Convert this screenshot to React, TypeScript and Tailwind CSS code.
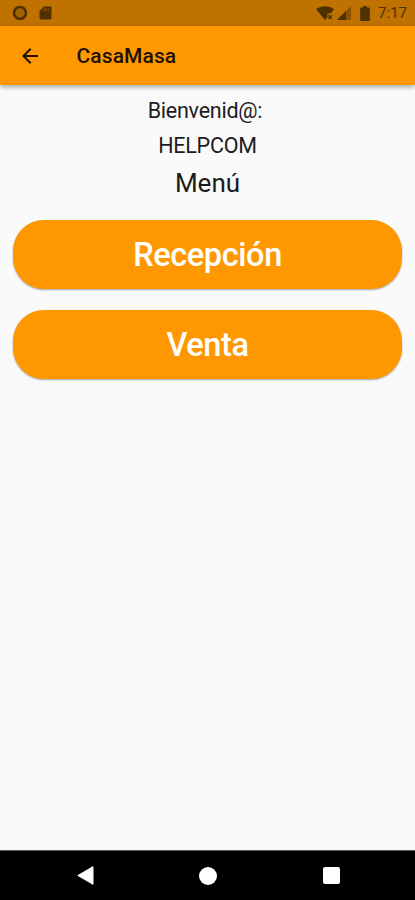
import type { ReactNode } from "react";

const menuItems = [
  { id: 1, label: "Recepción" },
  { id: 2, label: "Venta" },
];

function StatusBar() {
  return (
    <div className="flex h-[26px] shrink-0 items-center justify-between bg-[#bf7200] pl-[12px] pr-[8px] text-[#4f3000]">
      <div className="flex items-center gap-[11px]">
        <svg className="h-4 w-4" viewBox="0 0 16 16" fill="none">
          <circle cx="8" cy="8" r="6" fill="#a26102" stroke="currentColor" strokeWidth="2.6" />
        </svg>
        <svg className="h-[14px] w-[13px]" viewBox="0 0 13 14">
          <path d="M5 .5h6.3c.7 0 1.2.5 1.2 1.2v10.6c0 .7-.5 1.2-1.2 1.2H1.7c-.7 0-1.2-.5-1.2-1.2V5z" fill="currentColor" />
          <path d="M5.4 2.5v2.3M7.6 2.5v2.3M9.8 2.5v2.3" stroke="#a26102" strokeWidth="1" />
        </svg>
      </div>
      <div className="flex items-center">
        <svg className="h-[14px] w-[18px]" viewBox="0 0 18 14">
          <path d="M0 3.2C5-.7 13-.7 18 3.2l-3.4 4.2h-3.2v3.8L9 14z" fill="currentColor" />
          <path d="M12.4 9.2l3.4 3.8M15.8 9.2l-3.4 3.8" stroke="currentColor" strokeWidth="1.4" />
        </svg>
        <svg className="ml-[3px] h-[14px] w-[14px]" viewBox="0 0 14 14">
          <path d="M14 0v14H0z" fill="#8a5301" />
          <path d="M9 5v9H0z" fill="currentColor" />
        </svg>
        <svg className="ml-[9px] h-[15px] w-[10px]" viewBox="0 0 10 15">
          <path d="M3 0h4v1.6h1.8c.6 0 1 .4 1 1V14c0 .6-.4 1-1 1H1.2c-.6 0-1-.4-1-1V2.6c0-.6.4-1 1-1H3z" fill="currentColor" />
        </svg>
        <span className="ml-[8px] text-[15px] leading-none">7:17</span>
      </div>
    </div>
  );
}

function AppBar({ title }: { title: string }) {
  return (
    <header className="z-10 flex h-[59px] shrink-0 items-center bg-[#ff9800] pl-[20px] shadow-[0_2px_5px_rgba(0,0,0,0.35)]">
      <button aria-label="Volver" className="flex h-5 w-5 items-center justify-center">
        <svg className="h-4 w-4" viewBox="4 4 16 16">
          <path d="M20 11H7.83l5.59-5.59L12 4l-8 8 8 8 1.41-1.41L7.83 13H20z" fill="#1c1100" />
        </svg>
      </button>
      <h1 className="ml-[36.5px] mt-[2px] text-[21px] font-medium leading-none tracking-[0.1px] text-[#1c1100]">{title}</h1>
    </header>
  );
}

function MenuButton({ children }: { children: ReactNode }) {
  return (
    <button className="flex h-[69px] w-full items-center justify-center rounded-[31px] bg-[#ff9800] pt-px text-[32.5px] font-medium leading-none tracking-[-0.4px] text-white shadow-[0_1px_2px_rgba(0,0,0,0.35)]">
      {children}
    </button>
  );
}

function NavigationBar() {
  return (
    <nav className="flex h-[50px] shrink-0 items-center justify-between border-t border-[#555] bg-black pl-[77px] pr-[75px]">
      <svg className="h-[19px] w-[17px]" viewBox="0 0 17 19">
        <path d="M15.8 1v17L1.2 9.5z" fill="white" stroke="white" strokeWidth="1.4" strokeLinejoin="round" />
      </svg>
      <div className="mr-[2px] h-[18px] w-[18px] rounded-full bg-white" />
      <div className="h-[17px] w-[17px] rounded-[2px] bg-white" />
    </nav>
  );
}

export default function App() {
  return (
    <div className="flex h-[900px] w-[415px] flex-col overflow-hidden bg-[#fafafa] font-['Roboto',sans-serif]">
      <StatusBar />
      <AppBar title="CasaMasa" />

      <main className="flex flex-1 flex-col px-[13px] pt-[14px] text-[#1c1c1c]">
        <div className="flex flex-col items-center">
          <p className="mr-[5px] text-[21.5px] leading-[24px] tracking-[-0.25px]">Bienvenid@:</p>
          <p className="mt-[11px] text-[21.5px] leading-[24px] tracking-[-0.25px]">HELPCOM</p>
          <h2 className="mt-[10px] text-[26px] leading-[30px]">Menú</h2>
        </div>

        {/* Menu options */}
        <div className="mt-[22px] flex flex-col gap-[21px]">
          {menuItems.map((item) => (
            <MenuButton key={item.id}>{item.label}</MenuButton>
          ))}
        </div>
      </main>

      <NavigationBar />
    </div>
  );
}
